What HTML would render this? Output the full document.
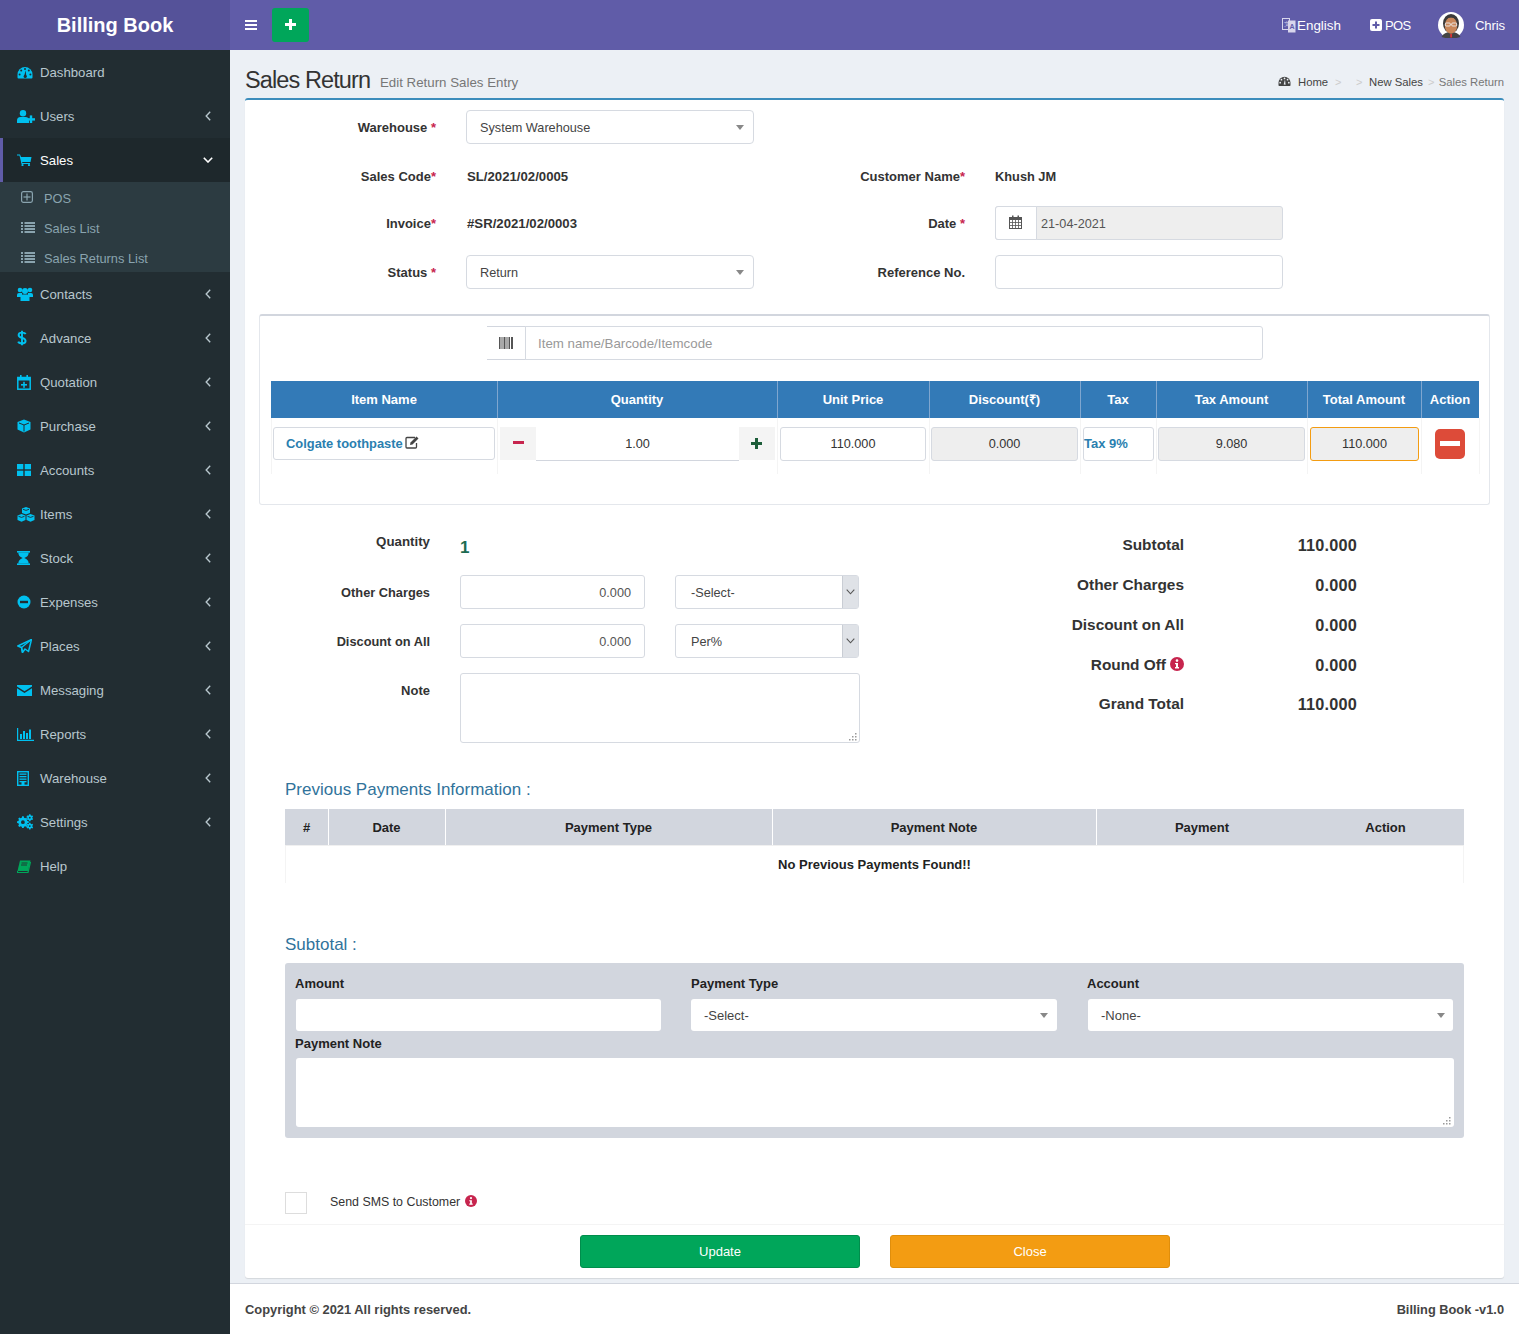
<!DOCTYPE html>
<html><head><meta charset="utf-8">
<style>
*{box-sizing:border-box;margin:0;padding:0}
html,body{width:1519px;height:1334px;overflow:hidden}
body{position:relative;background:#ecf0f5;font-family:"Liberation Sans",sans-serif;font-size:13px;color:#333}
.a{position:absolute}
.t{position:absolute;white-space:nowrap;line-height:20px;height:20px}
.r{text-align:right}
.c{text-align:center}
.b{font-weight:bold}
.req{color:#c7254e}
.box{position:absolute;background:#fff;border:1px solid #d2d6de;border-radius:3px}
.gry{background:#eee}
svg{display:block}
.sbt{font-size:13.2px}
.sbs{font-size:12.8px}
/* sidebar */
#sb{left:0;top:50px;width:230px;height:1284px;background:#222d32}







</style></head>
<body>
<!-- HEADER -->
<div class="a" style="left:0;top:0;width:230px;height:50px;background:#555299"></div>
<div class="t b" style="left:0;top:15px;width:230px;text-align:center;color:#fff;font-size:20px;line-height:20px;height:20px">Billing Book</div>
<div class="a" style="left:230px;top:0;width:1289px;height:50px;background:#605ca8"></div>
<!-- hamburger -->
<div class="a" style="left:245px;top:20px;width:12px;height:2px;background:#fff"></div>
<div class="a" style="left:245px;top:24px;width:12px;height:2px;background:#fff"></div>
<div class="a" style="left:245px;top:28px;width:12px;height:2px;background:#fff"></div>
<!-- green plus button -->
<div class="a" style="left:272px;top:8px;width:37px;height:34px;background:#00a65a;border-radius:3px"></div>
<div class="a" style="left:285px;top:23px;width:11px;height:3px;background:#fff"></div>
<div class="a" style="left:289px;top:19px;width:3px;height:11px;background:#fff"></div>
<!-- right nav -->
<svg class="a" style="left:1282px;top:18px" width="14" height="15" viewBox="0 0 14 15"><rect x="0.5" y="0.5" width="7" height="11" fill="none" stroke="#d8d6ec" stroke-width="1"/><rect x="6" y="2.5" width="7.5" height="12" fill="#d8d6ec"/><text x="1.5" y="8" font-size="6" fill="#d8d6ec" font-family="Liberation Sans">文</text><text x="7.5" y="10.5" font-size="7" fill="#605ca8" font-family="Liberation Sans" font-weight="bold">A</text></svg>
<div class="t" style="left:1297px;top:16px;color:#fff;font-size:13.4px">English</div>
<svg class="a" style="left:1370px;top:19px" width="12" height="12" viewBox="0 0 12 12"><rect x="0" y="0" width="12" height="12" rx="2" fill="#fff"/><rect x="2.5" y="5" width="7" height="2" fill="#605ca8"/><rect x="5" y="2.5" width="2" height="7" fill="#605ca8"/></svg>
<div class="t" style="left:1385px;top:16px;color:#fff;font-size:13px;letter-spacing:-0.6px">POS</div>
<svg class="a" style="left:1438px;top:12px" width="26" height="26" viewBox="0 0 26 26"><circle cx="13" cy="13" r="13" fill="#fff"/><path d="M3.5 25 Q6 20 13 20 Q20 20 22.5 25 Q18 26.5 13 26.5 Q8 26.5 3.5 25Z" fill="#444"/><ellipse cx="13" cy="11.5" rx="8" ry="9.5" fill="#3a3a3a"/><ellipse cx="13" cy="13.5" rx="6.2" ry="8.3" fill="#c9875a"/><path d="M8 6 Q13 3 18 6" stroke="#3a3a3a" stroke-width="2" fill="none"/><rect x="7.3" y="11" width="5" height="3" rx="1" fill="none" stroke="#eee" stroke-width="0.9"/><rect x="13.7" y="11" width="5" height="3" rx="1" fill="none" stroke="#eee" stroke-width="0.9"/><rect x="12.3" y="22" width="1.6" height="3.5" fill="#e33"/></svg>
<div class="t" style="left:1475px;top:16px;color:#fff;font-size:13.2px;letter-spacing:-0.2px">Chris</div>

<!-- SIDEBAR -->
<div id="sb" class="a"></div>
<div class="a" style="left:0;top:138px;width:230px;height:44px;background:#1e282c"></div>
<div class="a" style="left:0;top:138px;width:3px;height:44px;background:#605ca8"></div>
<div class="a" style="left:0;top:182px;width:230px;height:90px;background:#2c3b41"></div>
<div class="a ic" style="left:17px;top:50px;width:20px;height:44px;display:flex;align-items:center"><svg width="16" height="13" viewBox="0 0 16 13"><path d="M0.5 11.5 L0.5 8.5 A7.5 7.5 0 0 1 15.5 8.5 L15.5 11.5 Q15.5 12.5 14.5 12.5 L1.5 12.5 Q0.5 12.5 0.5 11.5Z" fill="#00c0ef"/><circle cx="8" cy="3" r="1" fill="#222d32"/><circle cx="4.2" cy="4.6" r="1" fill="#222d32"/><circle cx="11.8" cy="4.6" r="1" fill="#222d32"/><circle cx="2.6" cy="8.4" r="1" fill="#222d32"/><circle cx="13.4" cy="8.4" r="1" fill="#222d32"/><path d="M7 10.5 L8.6 4.5 L9.4 10.8Z" fill="#222d32"/><circle cx="8.2" cy="10.4" r="1.6" fill="#222d32"/></svg></div>
<div class="t sbt" style="left:40px;top:63px;color:#b8c7ce">Dashboard</div>
<div class="a ic" style="left:17px;top:94px;width:20px;height:44px;display:flex;align-items:center"><svg width="18" height="13" viewBox="0 0 18 13"><circle cx="6" cy="3.2" r="3.2" fill="#00c0ef"/><path d="M0 13 L0 10.5 Q0 7 3.5 7 L8.5 7 Q12 7 12 10.5 L12 13Z" fill="#00c0ef"/><rect x="10" y="8.2" width="8" height="2.4" fill="#00c0ef"/><rect x="12.8" y="5.4" width="2.4" height="8" fill="#00c0ef"/></svg></div>
<div class="t sbt" style="left:40px;top:107px;color:#b8c7ce">Users</div>
<div class="a" style="left:205px;top:111px"><svg width="6" height="10" viewBox="0 0 6 10"><path d="M5.2 0.8 L1.2 5 L5.2 9.2" fill="none" stroke="#b8c7ce" stroke-width="1.4"/></svg></div>
<div class="a ic" style="left:17px;top:138px;width:20px;height:44px;display:flex;align-items:center"><svg width="15" height="12" viewBox="0 0 15 12"><path d="M0 0.5 L3 0.5 L4 3 L14.5 3 L13.5 8 L5 8 L5.5 9 L13 9 L13 10 L4.5 10 L2.5 1.6 L0 1.6Z" fill="#00c0ef"/><circle cx="5.5" cy="11" r="1.1" fill="#00c0ef"/><circle cx="12" cy="11" r="1.1" fill="#00c0ef"/></svg></div>
<div class="t sbt" style="left:40px;top:151px;color:#fff">Sales</div>
<div class="a" style="left:203px;top:157px"><svg width="10" height="6" viewBox="0 0 10 6"><path d="M0.8 0.8 L5 5 L9.2 0.8" fill="none" stroke="#fff" stroke-width="1.6"/></svg></div>
<div class="a ic" style="left:17px;top:272px;width:20px;height:44px;display:flex;align-items:center"><svg width="16" height="14" viewBox="0 0 16 14"><circle cx="3" cy="3" r="2.3" fill="#00c0ef"/><circle cx="13" cy="3" r="2.3" fill="#00c0ef"/><circle cx="8" cy="4" r="3" fill="#00c0ef"/><path d="M0 10 L0 8 Q0 6 2 6 L5 6 L5 10Z" fill="#00c0ef"/><path d="M16 10 L16 8 Q16 6 14 6 L11 6 L11 10Z" fill="#00c0ef"/><path d="M3.5 14 L3.5 10 Q3.5 7.5 6 7.5 L10 7.5 Q12.5 7.5 12.5 10 L12.5 14Z" fill="#00c0ef"/></svg></div>
<div class="t sbt" style="left:40px;top:285px;color:#b8c7ce">Contacts</div>
<div class="a" style="left:205px;top:289px"><svg width="6" height="10" viewBox="0 0 6 10"><path d="M5.2 0.8 L1.2 5 L5.2 9.2" fill="none" stroke="#b8c7ce" stroke-width="1.4"/></svg></div>
<div class="a ic" style="left:17px;top:316px;width:20px;height:44px;display:flex;align-items:center"><svg width="10" height="16" viewBox="0 0 10 16"><path d="M8.6 4.2 Q8 2.6 5 2.6 Q1.6 2.6 1.6 5 Q1.6 7 5 7.8 Q8.6 8.6 8.6 11 Q8.6 13.4 5 13.4 Q1.8 13.4 1.2 11.6 M5 0.8 V15.2" fill="none" stroke="#00c0ef" stroke-width="1.9"/></svg></div>
<div class="t sbt" style="left:40px;top:329px;color:#b8c7ce">Advance</div>
<div class="a" style="left:205px;top:333px"><svg width="6" height="10" viewBox="0 0 6 10"><path d="M5.2 0.8 L1.2 5 L5.2 9.2" fill="none" stroke="#b8c7ce" stroke-width="1.4"/></svg></div>
<div class="a ic" style="left:17px;top:360px;width:20px;height:44px;display:flex;align-items:center"><svg width="14" height="15" viewBox="0 0 14 15"><rect x="0.8" y="2.5" width="12.4" height="11.7" fill="none" stroke="#00c0ef" stroke-width="1.5"/><rect x="0.8" y="2.5" width="12.4" height="3" fill="#00c0ef"/><rect x="3" y="0" width="1.6" height="3" fill="#00c0ef"/><rect x="9.4" y="0" width="1.6" height="3" fill="#00c0ef"/><rect x="4" y="9" width="6" height="1.6" fill="#00c0ef"/><rect x="6.2" y="6.8" width="1.6" height="6" fill="#00c0ef"/></svg></div>
<div class="t sbt" style="left:40px;top:373px;color:#b8c7ce">Quotation</div>
<div class="a" style="left:205px;top:377px"><svg width="6" height="10" viewBox="0 0 6 10"><path d="M5.2 0.8 L1.2 5 L5.2 9.2" fill="none" stroke="#b8c7ce" stroke-width="1.4"/></svg></div>
<div class="a ic" style="left:17px;top:404px;width:20px;height:44px;display:flex;align-items:center"><svg width="14" height="14" viewBox="0 0 14 14"><path d="M7 0.5 L13.5 3 L13.5 10.5 L7 13.5 L0.5 10.5 L0.5 3Z" fill="#00c0ef"/><path d="M2 4 L7 6 L12 4" fill="none" stroke="#222d32" stroke-width="1"/><path d="M7 6 L7 12.5" stroke="#222d32" stroke-width="1"/><path d="M8 7 L12.5 5 L12.5 10 L8 12Z" fill="#222d32" opacity="0.0"/></svg></div>
<div class="t sbt" style="left:40px;top:417px;color:#b8c7ce">Purchase</div>
<div class="a" style="left:205px;top:421px"><svg width="6" height="10" viewBox="0 0 6 10"><path d="M5.2 0.8 L1.2 5 L5.2 9.2" fill="none" stroke="#b8c7ce" stroke-width="1.4"/></svg></div>
<div class="a ic" style="left:17px;top:448px;width:20px;height:44px;display:flex;align-items:center"><svg width="14" height="12" viewBox="0 0 14 12"><rect x="0" y="0" width="6.3" height="5.3" fill="#00c0ef"/><rect x="7.7" y="0" width="6.3" height="5.3" fill="#00c0ef"/><rect x="0" y="6.7" width="6.3" height="5.3" fill="#00c0ef"/><rect x="7.7" y="6.7" width="6.3" height="5.3" fill="#00c0ef"/></svg></div>
<div class="t sbt" style="left:40px;top:461px;color:#b8c7ce">Accounts</div>
<div class="a" style="left:205px;top:465px"><svg width="6" height="10" viewBox="0 0 6 10"><path d="M5.2 0.8 L1.2 5 L5.2 9.2" fill="none" stroke="#b8c7ce" stroke-width="1.4"/></svg></div>
<div class="a ic" style="left:17px;top:492px;width:20px;height:44px;display:flex;align-items:center"><svg width="18" height="15" viewBox="0 0 18 15"><path d="M9 0 L13 1.5 L13 6 L9 7.5 L5 6 L5 1.5Z" fill="#00c0ef"/><path d="M4.5 7 L8.5 8.5 L8.5 13 L4.5 14.8 L0.5 13 L0.5 8.5Z" fill="#00c0ef"/><path d="M13.5 7 L17.5 8.5 L17.5 13 L13.5 14.8 L9.5 13 L9.5 8.5Z" fill="#00c0ef"/><path d="M6 2.3 L9 3.4 L12 2.3 M1.5 9.3 L4.5 10.4 L7.5 9.3 M10.5 9.3 L13.5 10.4 L16.5 9.3" fill="none" stroke="#222d32" stroke-width="0.9"/></svg></div>
<div class="t sbt" style="left:40px;top:505px;color:#b8c7ce">Items</div>
<div class="a" style="left:205px;top:509px"><svg width="6" height="10" viewBox="0 0 6 10"><path d="M5.2 0.8 L1.2 5 L5.2 9.2" fill="none" stroke="#b8c7ce" stroke-width="1.4"/></svg></div>
<div class="a ic" style="left:17px;top:536px;width:20px;height:44px;display:flex;align-items:center"><svg width="13" height="14" viewBox="0 0 13 14"><rect x="0" y="0" width="13" height="1.6" fill="#00c0ef"/><rect x="0" y="12.4" width="13" height="1.6" fill="#00c0ef"/><path d="M1.3 1.5 L11.7 1.5 Q11.7 5.5 7.3 7 Q11.7 8.5 11.7 12.5 L1.3 12.5 Q1.3 8.5 5.7 7 Q1.3 5.5 1.3 1.5Z" fill="#00c0ef"/></svg></div>
<div class="t sbt" style="left:40px;top:549px;color:#b8c7ce">Stock</div>
<div class="a" style="left:205px;top:553px"><svg width="6" height="10" viewBox="0 0 6 10"><path d="M5.2 0.8 L1.2 5 L5.2 9.2" fill="none" stroke="#b8c7ce" stroke-width="1.4"/></svg></div>
<div class="a ic" style="left:17px;top:580px;width:20px;height:44px;display:flex;align-items:center"><svg width="14" height="14" viewBox="0 0 14 14"><circle cx="7" cy="7" r="6.5" fill="#00c0ef"/><rect x="3" y="5.8" width="8" height="2.4" fill="#222d32"/></svg></div>
<div class="t sbt" style="left:40px;top:593px;color:#b8c7ce">Expenses</div>
<div class="a" style="left:205px;top:597px"><svg width="6" height="10" viewBox="0 0 6 10"><path d="M5.2 0.8 L1.2 5 L5.2 9.2" fill="none" stroke="#b8c7ce" stroke-width="1.4"/></svg></div>
<div class="a ic" style="left:17px;top:624px;width:20px;height:44px;display:flex;align-items:center"><svg width="15" height="14" viewBox="0 0 15 14"><path d="M14.5 0.5 L0.8 7 L4.5 8.5 L5.5 13.5 L8 10 L11.5 12.5Z" fill="none" stroke="#00c0ef" stroke-width="1.5" stroke-linejoin="round"/><path d="M14.5 0.5 L4.5 8.5 L5.5 13.5" fill="none" stroke="#00c0ef" stroke-width="1.3"/></svg></div>
<div class="t sbt" style="left:40px;top:637px;color:#b8c7ce">Places</div>
<div class="a" style="left:205px;top:641px"><svg width="6" height="10" viewBox="0 0 6 10"><path d="M5.2 0.8 L1.2 5 L5.2 9.2" fill="none" stroke="#b8c7ce" stroke-width="1.4"/></svg></div>
<div class="a ic" style="left:17px;top:668px;width:20px;height:44px;display:flex;align-items:center"><svg width="15" height="11" viewBox="0 0 15 11"><path d="M0 0 L15 0 L15 1.5 L7.5 6.3 L0 1.5Z" fill="#00c0ef"/><path d="M0 3.3 L7.5 8 L15 3.3 L15 11 L0 11Z" fill="#00c0ef"/></svg></div>
<div class="t sbt" style="left:40px;top:681px;color:#b8c7ce">Messaging</div>
<div class="a" style="left:205px;top:685px"><svg width="6" height="10" viewBox="0 0 6 10"><path d="M5.2 0.8 L1.2 5 L5.2 9.2" fill="none" stroke="#b8c7ce" stroke-width="1.4"/></svg></div>
<div class="a ic" style="left:17px;top:712px;width:20px;height:44px;display:flex;align-items:center"><svg width="17" height="13" viewBox="0 0 17 13"><path d="M0.6 0 L0.6 12.4 L17 12.4" fill="none" stroke="#00c0ef" stroke-width="1.2"/><rect x="3" y="6" width="2" height="5" fill="#00c0ef"/><rect x="6" y="3" width="2" height="8" fill="#00c0ef"/><rect x="9" y="5" width="2" height="6" fill="#00c0ef"/><rect x="12" y="1.5" width="2" height="9.5" fill="#00c0ef"/></svg></div>
<div class="t sbt" style="left:40px;top:725px;color:#b8c7ce">Reports</div>
<div class="a" style="left:205px;top:729px"><svg width="6" height="10" viewBox="0 0 6 10"><path d="M5.2 0.8 L1.2 5 L5.2 9.2" fill="none" stroke="#b8c7ce" stroke-width="1.4"/></svg></div>
<div class="a ic" style="left:17px;top:756px;width:20px;height:44px;display:flex;align-items:center"><svg width="12" height="15" viewBox="0 0 12 15"><rect x="0.7" y="0.7" width="10.6" height="13.6" fill="none" stroke="#00c0ef" stroke-width="1.4"/><rect x="2.5" y="2.5" width="7" height="1.3" fill="#00c0ef"/><rect x="2.5" y="5" width="7" height="1.3" fill="#00c0ef"/><rect x="2.5" y="7.5" width="7" height="1.3" fill="#00c0ef"/><rect x="2.5" y="10" width="7" height="1.3" fill="#00c0ef"/><rect x="4.5" y="11" width="3" height="4" fill="#00c0ef"/></svg></div>
<div class="t sbt" style="left:40px;top:769px;color:#b8c7ce">Warehouse</div>
<div class="a" style="left:205px;top:773px"><svg width="6" height="10" viewBox="0 0 6 10"><path d="M5.2 0.8 L1.2 5 L5.2 9.2" fill="none" stroke="#b8c7ce" stroke-width="1.4"/></svg></div>
<div class="a ic" style="left:17px;top:800px;width:20px;height:44px;display:flex;align-items:center"><svg width="17" height="16" viewBox="0 0 17 16"><path fill-rule="evenodd" d="M5.07 2.36 L6.73 2.36 L7.04 3.74 L8.24 4.24 L9.44 3.48 L10.62 4.66 L9.86 5.86 L10.36 7.06 L11.74 7.37 L11.74 9.03 L10.36 9.34 L9.86 10.54 L10.62 11.74 L9.44 12.92 L8.24 12.16 L7.04 12.66 L6.73 14.04 L5.07 14.04 L4.76 12.66 L3.56 12.16 L2.36 12.92 L1.18 11.74 L1.94 10.54 L1.44 9.34 L0.06 9.03 L0.06 7.37 L1.44 7.06 L1.94 5.86 L1.18 4.66 L2.36 3.48 L3.56 4.24 L4.76 3.74Z M7.80 8.20 A1.9 1.9 0 1 0 4.00 8.20 A1.9 1.9 0 1 0 7.80 8.20Z M12.14 0.26 L13.46 0.26 L13.66 1.24 L14.50 1.73 L15.45 1.41 L16.11 2.55 L15.35 3.21 L15.35 4.19 L16.11 4.85 L15.45 5.99 L14.50 5.67 L13.66 6.16 L13.46 7.14 L12.14 7.14 L11.94 6.16 L11.10 5.67 L10.15 5.99 L9.49 4.85 L10.25 4.19 L10.25 3.21 L9.49 2.55 L10.15 1.41 L11.10 1.73 L11.94 1.24Z M13.70 3.70 A0.9 0.9 0 1 0 11.90 3.70 A0.9 0.9 0 1 0 13.70 3.70Z M12.14 8.66 L13.46 8.66 L13.66 9.64 L14.50 10.13 L15.45 9.81 L16.11 10.95 L15.35 11.61 L15.35 12.59 L16.11 13.25 L15.45 14.39 L14.50 14.07 L13.66 14.56 L13.46 15.54 L12.14 15.54 L11.94 14.56 L11.10 14.07 L10.15 14.39 L9.49 13.25 L10.25 12.59 L10.25 11.61 L9.49 10.95 L10.15 9.81 L11.10 10.13 L11.94 9.64Z M13.70 12.10 A0.9 0.9 0 1 0 11.90 12.10 A0.9 0.9 0 1 0 13.70 12.10Z" fill="#00c0ef"/></svg></div>
<div class="t sbt" style="left:40px;top:813px;color:#b8c7ce">Settings</div>
<div class="a" style="left:205px;top:817px"><svg width="6" height="10" viewBox="0 0 6 10"><path d="M5.2 0.8 L1.2 5 L5.2 9.2" fill="none" stroke="#b8c7ce" stroke-width="1.4"/></svg></div>
<div class="a ic" style="left:17px;top:844px;width:20px;height:44px;display:flex;align-items:center"><svg width="14" height="13" viewBox="0 0 14 13"><path d="M3 0.5 L13.5 0.5 L11 11 L0.5 11Z" fill="#00a65a"/><path d="M0.5 11 L0.5 12.5 L11 12.5 L13.5 2" fill="none" stroke="#00a65a" stroke-width="1.2"/><path d="M4.5 3 L10.5 3 M4 5 L10 5" stroke="#222d32" stroke-width="0.9"/></svg></div>
<div class="t sbt" style="left:40px;top:857px;color:#b8c7ce">Help</div>
<div class="a" style="left:21px;top:182px;height:30px;display:flex;align-items:center"><svg width="12" height="12" viewBox="0 0 12 12"><rect x="0.6" y="0.6" width="10.8" height="10.8" rx="1.8" fill="none" stroke="#8aa4af" stroke-width="1.2"/><rect x="5.4" y="2.5" width="1.2" height="7" fill="#8aa4af"/><rect x="2.5" y="5.4" width="7" height="1.2" fill="#8aa4af"/></svg></div>
<div class="t sbs" style="left:44px;top:188.5px;color:#8aa4af">POS</div>
<div class="a" style="left:21px;top:212px;height:30px;display:flex;align-items:center"><svg width="14" height="11" viewBox="0 0 14 11"><rect x="0" y="0" width="2" height="2" fill="#8aa4af"/><rect x="3.5" y="0" width="10.5" height="2" fill="#8aa4af"/><rect x="0" y="3" width="2" height="2" fill="#8aa4af"/><rect x="3.5" y="3" width="10.5" height="2" fill="#8aa4af"/><rect x="0" y="6" width="2" height="2" fill="#8aa4af"/><rect x="3.5" y="6" width="10.5" height="2" fill="#8aa4af"/><rect x="0" y="9" width="2" height="2" fill="#8aa4af"/><rect x="3.5" y="9" width="10.5" height="2" fill="#8aa4af"/></svg></div>
<div class="t sbs" style="left:44px;top:218.5px;color:#8aa4af">Sales List</div>
<div class="a" style="left:21px;top:242px;height:30px;display:flex;align-items:center"><svg width="14" height="11" viewBox="0 0 14 11"><rect x="0" y="0" width="2" height="2" fill="#8aa4af"/><rect x="3.5" y="0" width="10.5" height="2" fill="#8aa4af"/><rect x="0" y="3" width="2" height="2" fill="#8aa4af"/><rect x="3.5" y="3" width="10.5" height="2" fill="#8aa4af"/><rect x="0" y="6" width="2" height="2" fill="#8aa4af"/><rect x="3.5" y="6" width="10.5" height="2" fill="#8aa4af"/><rect x="0" y="9" width="2" height="2" fill="#8aa4af"/><rect x="3.5" y="9" width="10.5" height="2" fill="#8aa4af"/></svg></div>
<div class="t sbs" style="left:44px;top:248.5px;color:#8aa4af">Sales Returns List</div>

<!-- CONTENT HEADER -->
<div class="t" style="left:245px;top:68px;font-size:23.5px;letter-spacing:-0.9px;line-height:24px;height:24px;color:#333">Sales Return</div>
<div class="t" style="left:380px;top:73px;font-size:13.3px;color:#777">Edit Return Sales Entry</div>

<!-- breadcrumb -->
<svg class="a" style="left:1278px;top:76px" width="13" height="10" viewBox="0 0 16 12.5"><path d="M0.5 11.5 L0.5 8.5 A7.5 7.5 0 0 1 15.5 8.5 L15.5 11.5 Q15.5 12.5 14.5 12.5 L1.5 12.5 Q0.5 12.5 0.5 11.5Z" fill="#444"/><circle cx="8" cy="3" r="1.1" fill="#ecf0f5"/><circle cx="4.2" cy="4.6" r="1.1" fill="#ecf0f5"/><circle cx="11.8" cy="4.6" r="1.1" fill="#ecf0f5"/><circle cx="2.6" cy="8.4" r="1.1" fill="#ecf0f5"/><circle cx="13.4" cy="8.4" r="1.1" fill="#ecf0f5"/><path d="M7 10.5 L8.6 4.5 L9.4 10.8Z" fill="#ecf0f5"/></svg>
<div class="t" style="left:1298px;top:71.5px;font-size:11.3px;line-height:20px;height:20px;color:#444;">Home</div>
<div class="t" style="left:1335px;top:72.0px;font-size:11px;line-height:20px;height:20px;color:#ccc;">&gt;</div>
<div class="t" style="left:1356px;top:72.0px;font-size:11px;line-height:20px;height:20px;color:#ccc;">&gt;</div>
<div class="t" style="left:1369px;top:72.0px;font-size:11.3px;line-height:20px;height:20px;color:#444;">New Sales</div>
<div class="t" style="left:1428px;top:72.0px;font-size:11px;line-height:20px;height:20px;color:#ccc;">&gt;</div>
<div class="t" style="right:15px;text-align:right;top:72.0px;font-size:11.3px;line-height:20px;height:20px;color:#777;">Sales Return</div>

<!-- MAIN BOX -->
<div class="a" style="left:245px;top:98px;width:1259px;height:1180px;background:#fff;border-top:2px solid #3c8dbc;border-radius:3px;box-shadow:0 1px 1px rgba(0,0,0,0.1)"></div>
<div class="t" style="right:1083px;text-align:right;top:118.0px;font-size:13px;line-height:20px;height:20px;color:#333;font-weight:bold;">Warehouse <span style="color:#c7254e">*</span></div>
<div class="a" style="left:466px;top:110px;width:288px;height:34px;background:#fff;border:1px solid #d6dae1;border-radius:4px;"></div>
<div class="t" style="left:480px;top:118.0px;font-size:12.7px;line-height:20px;height:20px;color:#444;">System Warehouse</div>
<svg class="a" style="left:736px;top:125px" width="8" height="5" viewBox="0 0 8 5"><path d="M0 0 L8 0 L4 5Z" fill="#888"/></svg>
<div class="t" style="right:1083px;text-align:right;top:167.0px;font-size:13px;line-height:20px;height:20px;color:#333;font-weight:bold;">Sales Code<span style="color:#c7254e">*</span></div>
<div class="t" style="left:467px;top:167.0px;font-size:13.2px;line-height:20px;height:20px;color:#333;font-weight:bold;">SL/2021/02/0005</div>
<div class="t" style="right:1083px;text-align:right;top:214.0px;font-size:13px;line-height:20px;height:20px;color:#333;font-weight:bold;">Invoice<span style="color:#c7254e">*</span></div>
<div class="t" style="left:467px;top:214.0px;font-size:13.2px;line-height:20px;height:20px;color:#333;font-weight:bold;">#SR/2021/02/0003</div>
<div class="t" style="right:1083px;text-align:right;top:263.0px;font-size:13px;line-height:20px;height:20px;color:#333;font-weight:bold;">Status <span style="color:#c7254e">*</span></div>
<div class="a" style="left:466px;top:255px;width:288px;height:34px;background:#fff;border:1px solid #d6dae1;border-radius:4px;"></div>
<div class="t" style="left:480px;top:263.0px;font-size:12.7px;line-height:20px;height:20px;color:#444;">Return</div>
<svg class="a" style="left:736px;top:270px" width="8" height="5" viewBox="0 0 8 5"><path d="M0 0 L8 0 L4 5Z" fill="#888"/></svg>
<div class="t" style="right:554px;text-align:right;top:167.0px;font-size:13px;line-height:20px;height:20px;color:#333;font-weight:bold;">Customer Name<span style="color:#c7254e">*</span></div>
<div class="t" style="left:995px;top:167.0px;font-size:12.8px;line-height:20px;height:20px;color:#333;font-weight:bold;">Khush JM</div>
<div class="t" style="right:554px;text-align:right;top:214.0px;font-size:13px;line-height:20px;height:20px;color:#333;font-weight:bold;">Date <span style="color:#c7254e">*</span></div>
<div class="a" style="left:995px;top:206px;width:288px;height:34px;background:#eee;border:1px solid #d6dae1;border-radius:3px;"></div>
<div class="a" style="left:995px;top:206px;width:42px;height:34px;background:#fff;border:1px solid #d6dae1;border-radius:0px;border-radius:3px 0 0 3px"></div>
<svg class="a" style="left:1009px;top:215px" width="13" height="14" viewBox="0 0 13 14"><rect x="0.5" y="2.5" width="12" height="11" fill="none" stroke="#555" stroke-width="1"/><rect x="0.5" y="2.5" width="12" height="2.5" fill="#555"/><rect x="3" y="0.5" width="1.5" height="3" fill="#555"/><rect x="8.5" y="0.5" width="1.5" height="3" fill="#555"/><path d="M0.5 7.5 H12.5 M0.5 10.5 H12.5 M3.5 5 V13.5 M6.5 5 V13.5 M9.5 5 V13.5" stroke="#555" stroke-width="0.8"/></svg>
<div class="t" style="left:1041px;top:214.0px;font-size:12.7px;line-height:20px;height:20px;color:#555;">21-04-2021</div>
<div class="t" style="right:554px;text-align:right;top:263.0px;font-size:13px;line-height:20px;height:20px;color:#333;font-weight:bold;">Reference No.</div>
<div class="a" style="left:995px;top:255px;width:288px;height:34px;background:#fff;border:1px solid #d6dae1;border-radius:4px;"></div>
<div class="a" style="left:259px;top:314px;width:1231px;height:191px;background:#fff;border:1px solid #e4e7ec;border-radius:3px;border-top:2px solid #d2d6de"></div>
<div class="a" style="left:487px;top:326px;width:39px;height:34px;background:#fff;border:1px solid #d2d6de;border-radius:0px;border-left:none"></div>
<svg class="a" style="left:499px;top:337px" width="14" height="12" viewBox="0 0 14 12"><rect x="0" y="0" width="1.5" height="12" fill="#555"/><rect x="2.5" y="0" width="1" height="12" fill="#555"/><rect x="4.5" y="0" width="2" height="12" fill="#555"/><rect x="7.5" y="0" width="1" height="12" fill="#555"/><rect x="9.5" y="0" width="1.5" height="12" fill="#555"/><rect x="12" y="0" width="2" height="12" fill="#555"/></svg>
<div class="a" style="left:525px;top:326px;width:738px;height:34px;background:#fff;border:1px solid #d6dae1;border-radius:3px;border-radius:0 3px 3px 0"></div>
<div class="t" style="left:538px;top:334.0px;font-size:13.3px;line-height:20px;height:20px;color:#999;">Item name/Barcode/Itemcode</div>
<div class="a" style="left:271px;top:381px;width:1208px;height:37px;background:#337ab7;border-radius:0px;"></div>
<div class="a" style="left:497px;top:381px;width:1px;height:37px;background:#7fa6cf;border-radius:0px;"></div>
<div class="a" style="left:777px;top:381px;width:1px;height:37px;background:#7fa6cf;border-radius:0px;"></div>
<div class="a" style="left:929px;top:381px;width:1px;height:37px;background:#7fa6cf;border-radius:0px;"></div>
<div class="a" style="left:1080px;top:381px;width:1px;height:37px;background:#7fa6cf;border-radius:0px;"></div>
<div class="a" style="left:1156px;top:381px;width:1px;height:37px;background:#7fa6cf;border-radius:0px;"></div>
<div class="a" style="left:1307px;top:381px;width:1px;height:37px;background:#7fa6cf;border-radius:0px;"></div>
<div class="a" style="left:1421px;top:381px;width:1px;height:37px;background:#7fa6cf;border-radius:0px;"></div>
<div class="t" style="left:84.0px;width:600px;text-align:center;top:389.5px;font-size:13px;line-height:20px;height:20px;color:#fff;font-weight:bold;">Item Name</div>
<div class="t" style="left:337.0px;width:600px;text-align:center;top:389.5px;font-size:13px;line-height:20px;height:20px;color:#fff;font-weight:bold;">Quantity</div>
<div class="t" style="left:553.0px;width:600px;text-align:center;top:389.5px;font-size:13px;line-height:20px;height:20px;color:#fff;font-weight:bold;">Unit Price</div>
<div class="t" style="left:704.5px;width:600px;text-align:center;top:389.5px;font-size:13px;line-height:20px;height:20px;color:#fff;font-weight:bold;">Discount(₹)</div>
<div class="t" style="left:818.0px;width:600px;text-align:center;top:389.5px;font-size:13px;line-height:20px;height:20px;color:#fff;font-weight:bold;">Tax</div>
<div class="t" style="left:931.5px;width:600px;text-align:center;top:389.5px;font-size:13px;line-height:20px;height:20px;color:#fff;font-weight:bold;">Tax Amount</div>
<div class="t" style="left:1064.0px;width:600px;text-align:center;top:389.5px;font-size:13px;line-height:20px;height:20px;color:#fff;font-weight:bold;">Total Amount</div>
<div class="t" style="left:1150.0px;width:600px;text-align:center;top:389.5px;font-size:13px;line-height:20px;height:20px;color:#fff;font-weight:bold;">Action</div>
<div class="a" style="left:271px;top:418px;width:1px;height:56px;background:#f4f4f4;border-radius:0px;"></div>
<div class="a" style="left:497px;top:418px;width:1px;height:56px;background:#f4f4f4;border-radius:0px;"></div>
<div class="a" style="left:777px;top:418px;width:1px;height:56px;background:#f4f4f4;border-radius:0px;"></div>
<div class="a" style="left:929px;top:418px;width:1px;height:56px;background:#f4f4f4;border-radius:0px;"></div>
<div class="a" style="left:1080px;top:418px;width:1px;height:56px;background:#f4f4f4;border-radius:0px;"></div>
<div class="a" style="left:1156px;top:418px;width:1px;height:56px;background:#f4f4f4;border-radius:0px;"></div>
<div class="a" style="left:1307px;top:418px;width:1px;height:56px;background:#f4f4f4;border-radius:0px;"></div>
<div class="a" style="left:1421px;top:418px;width:1px;height:56px;background:#f4f4f4;border-radius:0px;"></div>
<div class="a" style="left:1479px;top:418px;width:1px;height:56px;background:#f4f4f4;border-radius:0px;"></div>
<div class="a" style="left:273px;top:427px;width:222px;height:33px;background:#fff;border:1px solid #d6dae1;border-radius:3px;"></div>
<div class="t" style="left:286px;top:434.0px;font-size:12.9px;line-height:20px;height:20px;color:#2a7fb0;font-weight:bold;">Colgate toothpaste</div>
<svg class="a" style="left:405px;top:436px" width="14" height="13" viewBox="0 0 14 13"><path d="M10 1.5 H2 Q1 1.5 1 2.5 V11 Q1 12 2 12 H10.5 Q11.5 12 11.5 11 V7" fill="none" stroke="#444" stroke-width="1.3"/><path d="M5 9 L5.5 6.5 L11.5 0.5 L13.5 2.5 L7.5 8.5Z" fill="#444"/></svg>
<div class="a" style="left:500px;top:427px;width:36px;height:33px;background:#f4f4f4;border-radius:0px;"></div>
<div class="a" style="left:513px;top:441px;width:11px;height:3px;background:#c7254e;border-radius:0px;"></div>
<div class="a" style="left:536px;top:427px;width:203px;height:34px;background:#fff;border-radius:0px;border-bottom:1px solid #d2d6de"></div>
<div class="t" style="left:337.5px;width:600px;text-align:center;top:434.0px;font-size:12.7px;line-height:20px;height:20px;color:#333;">1.00</div>
<div class="a" style="left:739px;top:427px;width:36px;height:33px;background:#f4f4f4;border-radius:0px;"></div>
<div class="a" style="left:751px;top:442px;width:11px;height:3px;background:#1d5e3a;border-radius:0px;"></div>
<div class="a" style="left:755px;top:438px;width:3px;height:11px;background:#1d5e3a;border-radius:0px;"></div>
<div class="a" style="left:780px;top:427px;width:146px;height:34px;background:#fff;border:1px solid #d6dae1;border-radius:3px;"></div>
<div class="t" style="left:553px;width:600px;text-align:center;top:434.0px;font-size:12.7px;line-height:20px;height:20px;color:#333;">110.000</div>
<div class="a" style="left:931px;top:427px;width:147px;height:34px;background:#eee;border:1px solid #d6dae1;border-radius:3px;"></div>
<div class="t" style="left:704.5px;width:600px;text-align:center;top:434.0px;font-size:12.7px;line-height:20px;height:20px;color:#333;">0.000</div>
<div class="a" style="left:1083px;top:427px;width:71px;height:34px;background:#fff;border:1px solid #d6dae1;border-radius:3px;"></div>
<div class="t" style="left:1084px;top:434.0px;font-size:13px;line-height:20px;height:20px;color:#2a7fb0;font-weight:bold;">Tax 9%</div>
<div class="a" style="left:1158px;top:427px;width:147px;height:34px;background:#eee;border:1px solid #d6dae1;border-radius:3px;"></div>
<div class="t" style="left:931.5px;width:600px;text-align:center;top:434.0px;font-size:12.7px;line-height:20px;height:20px;color:#333;">9.080</div>
<div class="a" style="left:1310px;top:427px;width:109px;height:34px;background:#eee;border:1px solid #f39c12;border-radius:3px;"></div>
<div class="t" style="left:1064.5px;width:600px;text-align:center;top:434.0px;font-size:12.7px;line-height:20px;height:20px;color:#333;">110.000</div>
<div class="a" style="left:1435px;top:429px;width:30px;height:30px;background:#dd4b39;border-radius:5px;"></div>
<div class="a" style="left:1440px;top:441px;width:20px;height:5px;background:#fff;border-radius:0px;"></div>
<div class="t" style="right:1089px;text-align:right;top:532.0px;font-size:13.3px;line-height:20px;height:20px;color:#333;font-weight:bold;">Quantity</div>
<div class="t" style="left:460px;top:538.0px;font-size:17px;line-height:20px;height:20px;color:#1d6b52;font-weight:bold;">1</div>
<div class="t" style="right:1089px;text-align:right;top:583.0px;font-size:12.8px;line-height:20px;height:20px;color:#333;font-weight:bold;">Other Charges</div>
<div class="a" style="left:460px;top:575px;width:185px;height:34px;background:#fff;border:1px solid #d6dae1;border-radius:3px;"></div>
<div class="t" style="right:888px;text-align:right;top:583.0px;font-size:12.7px;line-height:20px;height:20px;color:#555;">0.000</div>
<div class="a" style="left:675px;top:575px;width:184px;height:34px;background:#fff;border:1px solid #d6dae1;border-radius:3px;"></div>
<div class="a" style="left:842px;top:576px;width:16px;height:32px;background:#dfe2e7;border-radius:0px;border-left:1px solid #c9cdd4"></div>
<svg class="a" style="left:846px;top:589px" width="9" height="6" viewBox="0 0 9 6"><path d="M0.7 0.7 L4.5 4.8 L8.3 0.7" fill="none" stroke="#555" stroke-width="1.1"/></svg>
<div class="t" style="left:691px;top:583.0px;font-size:12.7px;line-height:20px;height:20px;color:#444;">-Select-</div>
<div class="t" style="right:1089px;text-align:right;top:632.0px;font-size:12.8px;line-height:20px;height:20px;color:#333;font-weight:bold;">Discount on All</div>
<div class="a" style="left:460px;top:624px;width:185px;height:34px;background:#fff;border:1px solid #d6dae1;border-radius:3px;"></div>
<div class="t" style="right:888px;text-align:right;top:632.0px;font-size:12.7px;line-height:20px;height:20px;color:#555;">0.000</div>
<div class="a" style="left:675px;top:624px;width:184px;height:34px;background:#fff;border:1px solid #d6dae1;border-radius:3px;"></div>
<div class="a" style="left:842px;top:625px;width:16px;height:32px;background:#dfe2e7;border-radius:0px;border-left:1px solid #c9cdd4"></div>
<svg class="a" style="left:846px;top:638px" width="9" height="6" viewBox="0 0 9 6"><path d="M0.7 0.7 L4.5 4.8 L8.3 0.7" fill="none" stroke="#555" stroke-width="1.1"/></svg>
<div class="t" style="left:691px;top:632.0px;font-size:12.7px;line-height:20px;height:20px;color:#444;">Per%</div>
<div class="t" style="right:1089px;text-align:right;top:681.0px;font-size:13px;line-height:20px;height:20px;color:#333;font-weight:bold;">Note</div>
<div class="a" style="left:460px;top:673px;width:400px;height:70px;background:#fff;border:1px solid #d6dae1;border-radius:3px;"></div>
<svg class="a" style="left:849px;top:733px" width="8" height="8" viewBox="0 0 8 8"><rect x="6" y="0" width="1.5" height="1.5" fill="#999"/><rect x="3" y="3" width="1.5" height="1.5" fill="#999"/><rect x="6" y="3" width="1.5" height="1.5" fill="#999"/><rect x="0" y="6" width="1.5" height="1.5" fill="#999"/><rect x="3" y="6" width="1.5" height="1.5" fill="#999"/><rect x="6" y="6" width="1.5" height="1.5" fill="#999"/></svg>
<div class="t" style="right:335px;text-align:right;top:534.5px;font-size:15.4px;line-height:20px;height:20px;color:#333;font-weight:bold;">Subtotal</div>
<div class="t" style="right:162px;text-align:right;top:535.0px;font-size:16.3px;line-height:20px;height:20px;color:#333;font-weight:bold;letter-spacing:0.2px">110.000</div>
<div class="t" style="right:335px;text-align:right;top:574.5px;font-size:15.4px;line-height:20px;height:20px;color:#333;font-weight:bold;">Other Charges</div>
<div class="t" style="right:162px;text-align:right;top:575.0px;font-size:16.3px;line-height:20px;height:20px;color:#333;font-weight:bold;letter-spacing:0.2px">0.000</div>
<div class="t" style="right:335px;text-align:right;top:614.5px;font-size:15.4px;line-height:20px;height:20px;color:#333;font-weight:bold;">Discount on All</div>
<div class="t" style="right:162px;text-align:right;top:615.0px;font-size:16.3px;line-height:20px;height:20px;color:#333;font-weight:bold;letter-spacing:0.2px">0.000</div>
<div class="t" style="right:353px;text-align:right;top:654.5px;font-size:15.4px;line-height:20px;height:20px;color:#333;font-weight:bold;">Round Off</div>
<svg class="a" style="left:1170px;top:656.5px" width="14" height="14" viewBox="0 0 14 14"><circle cx="7" cy="7" r="7" fill="#c7254e"/><circle cx="7" cy="3.6" r="1.3" fill="#fff"/><path d="M5 6 L8 6 L8 10 L9 10 L9 11.5 L5 11.5 L5 10 L6 10 L6 7.3 L5 7.3Z" fill="#fff"/></svg>
<div class="t" style="right:162px;text-align:right;top:655.0px;font-size:16.3px;line-height:20px;height:20px;color:#333;font-weight:bold;letter-spacing:0.2px">0.000</div>
<div class="t" style="right:335px;text-align:right;top:693.5px;font-size:15.4px;line-height:20px;height:20px;color:#333;font-weight:bold;">Grand Total</div>
<div class="t" style="right:162px;text-align:right;top:694.0px;font-size:16.3px;line-height:20px;height:20px;color:#333;font-weight:bold;letter-spacing:0.2px">110.000</div>
<div class="t" style="left:285px;top:779.5px;font-size:17px;line-height:20px;height:20px;color:#31739b;">Previous Payments Information :</div>
<div class="a" style="left:285px;top:809px;width:1179px;height:36px;background:#d2d6de;border-radius:0px;"></div>
<div class="a" style="left:328px;top:809px;width:1px;height:36px;background:#fff;border-radius:0px;"></div>
<div class="a" style="left:445px;top:809px;width:1px;height:36px;background:#fff;border-radius:0px;"></div>
<div class="a" style="left:772px;top:809px;width:1px;height:36px;background:#fff;border-radius:0px;"></div>
<div class="a" style="left:1096px;top:809px;width:1px;height:36px;background:#fff;border-radius:0px;"></div>
<div class="t" style="left:6.5px;width:600px;text-align:center;top:818.0px;font-size:13px;line-height:20px;height:20px;color:#222;font-weight:bold;">#</div>
<div class="t" style="left:86.5px;width:600px;text-align:center;top:818.0px;font-size:13px;line-height:20px;height:20px;color:#222;font-weight:bold;">Date</div>
<div class="t" style="left:308.5px;width:600px;text-align:center;top:818.0px;font-size:13px;line-height:20px;height:20px;color:#222;font-weight:bold;">Payment Type</div>
<div class="t" style="left:634px;width:600px;text-align:center;top:818.0px;font-size:13px;line-height:20px;height:20px;color:#222;font-weight:bold;">Payment Note</div>
<div class="t" style="left:902px;width:600px;text-align:center;top:818.0px;font-size:13px;line-height:20px;height:20px;color:#222;font-weight:bold;">Payment</div>
<div class="t" style="left:1085.5px;width:600px;text-align:center;top:818.0px;font-size:13px;line-height:20px;height:20px;color:#222;font-weight:bold;">Action</div>
<div class="a" style="left:285px;top:845px;width:1179px;height:1px;background:#f0f0f0;border-radius:0px;"></div>
<div class="a" style="left:285px;top:846px;width:1px;height:37px;background:#f4f4f4;border-radius:0px;"></div>
<div class="a" style="left:1463px;top:846px;width:1px;height:37px;background:#f4f4f4;border-radius:0px;"></div>
<div class="t" style="left:574.5px;width:600px;text-align:center;top:855.0px;font-size:13px;line-height:20px;height:20px;color:#222;font-weight:bold;">No Previous Payments Found!!</div>
<div class="t" style="left:285px;top:935.0px;font-size:17px;line-height:20px;height:20px;color:#31739b;">Subtotal :</div>
<div class="a" style="left:285px;top:963px;width:1179px;height:175px;background:#d2d6de;border-radius:3px;"></div>
<div class="t" style="left:295px;top:974.0px;font-size:13px;line-height:20px;height:20px;color:#222;font-weight:bold;">Amount</div>
<div class="t" style="left:691px;top:974.0px;font-size:13px;line-height:20px;height:20px;color:#222;font-weight:bold;">Payment Type</div>
<div class="t" style="left:1087px;top:974.0px;font-size:13px;line-height:20px;height:20px;color:#222;font-weight:bold;">Account</div>
<div class="a" style="left:296px;top:999px;width:365px;height:32px;background:#fff;border-radius:3px;"></div>
<div class="a" style="left:691px;top:999px;width:366px;height:32px;background:#fff;border-radius:3px;"></div>
<div class="t" style="left:704px;top:1006.0px;font-size:13px;line-height:20px;height:20px;color:#444;">-Select-</div>
<svg class="a" style="left:1040px;top:1013px" width="8" height="5" viewBox="0 0 8 5"><path d="M0 0 L8 0 L4 5Z" fill="#888"/></svg>
<div class="a" style="left:1088px;top:999px;width:365px;height:32px;background:#fff;border-radius:3px;"></div>
<div class="t" style="left:1101px;top:1006.0px;font-size:13px;line-height:20px;height:20px;color:#444;">-None-</div>
<svg class="a" style="left:1437px;top:1013px" width="8" height="5" viewBox="0 0 8 5"><path d="M0 0 L8 0 L4 5Z" fill="#888"/></svg>
<div class="t" style="left:295px;top:1033.5px;font-size:13px;line-height:20px;height:20px;color:#222;font-weight:bold;">Payment Note</div>
<div class="a" style="left:296px;top:1058px;width:1158px;height:69px;background:#fff;border-radius:3px;"></div>
<svg class="a" style="left:1443px;top:1117px" width="8" height="8" viewBox="0 0 8 8"><rect x="6" y="0" width="1.5" height="1.5" fill="#999"/><rect x="3" y="3" width="1.5" height="1.5" fill="#999"/><rect x="6" y="3" width="1.5" height="1.5" fill="#999"/><rect x="0" y="6" width="1.5" height="1.5" fill="#999"/><rect x="3" y="6" width="1.5" height="1.5" fill="#999"/><rect x="6" y="6" width="1.5" height="1.5" fill="#999"/></svg>
<div class="a" style="left:285px;top:1192px;width:22px;height:22px;background:#fff;border:1px solid #ddd;border-radius:0px;"></div>
<div class="t" style="left:330px;top:1192.0px;font-size:12.4px;line-height:20px;height:20px;color:#333;">Send SMS to Customer</div>
<svg class="a" style="left:465px;top:1195px" width="12" height="12" viewBox="0 0 14 14"><circle cx="7" cy="7" r="7" fill="#c7254e"/><circle cx="7" cy="3.6" r="1.3" fill="#fff"/><path d="M5 6 L8 6 L8 10 L9 10 L9 11.5 L5 11.5 L5 10 L6 10 L6 7.3 L5 7.3Z" fill="#fff"/></svg>
<div class="a" style="left:245px;top:1224px;width:1259px;height:1px;background:#f4f4f4;border-radius:0px;"></div>
<div class="a" style="left:580px;top:1235px;width:280px;height:33px;background:#00a65a;border:1px solid #008d4c;border-radius:3px;"></div>
<div class="t" style="left:420px;width:600px;text-align:center;top:1242.0px;font-size:13px;line-height:20px;height:20px;color:#fff;">Update</div>
<div class="a" style="left:890px;top:1235px;width:280px;height:33px;background:#f39c12;border:1px solid #e08e0b;border-radius:3px;"></div>
<div class="t" style="left:730px;width:600px;text-align:center;top:1242.0px;font-size:13px;line-height:20px;height:20px;color:#fff;">Close</div>

<!-- FOOTER -->
<div class="a" style="left:230px;top:1283px;width:1289px;height:51px;background:#fff;border-top:1px solid #d2d6de"></div>
<div class="t b" style="left:245px;top:1300px;font-size:12.9px;color:#444">Copyright © 2021 All rights reserved.</div>
<div class="t b r" style="right:15px;top:1300px;font-size:12.8px;color:#444">Billing Book -v1.0</div>
</body></html>
